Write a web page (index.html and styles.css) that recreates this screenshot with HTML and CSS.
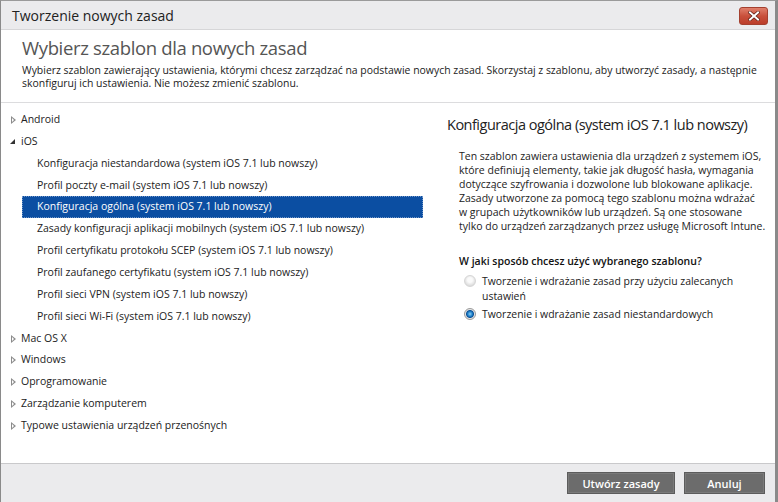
FILE: index.html
```html
<!DOCTYPE html>
<html lang="pl">
<head>
<meta charset="utf-8">
<title>Tworzenie nowych zasad</title>
<link rel="stylesheet" href="styles.css">
</head>
<body>
<div class="window">
  <div class="titlebar">
    <span class="title">Tworzenie nowych zasad</span>
    <button class="close" aria-label="Zamknij">
      <svg width="12" height="10" viewBox="0 0 12 10"><path d="M2 1.5 L10 8.5 M10 1.5 L2 8.5" stroke="#5a1a12" stroke-width="3.4" stroke-linecap="square"/><path d="M2 1.5 L10 8.5 M10 1.5 L2 8.5" stroke="#fff" stroke-width="2" stroke-linecap="square"/></svg>
    </button>
  </div>
  <div class="content">
    <div class="header">
      <h1>Wybierz szablon dla nowych zasad</h1>
      <p>Wybierz szablon zawierający ustawienia, którymi chcesz zarządzać na podstawie nowych zasad. Skorzystaj z szablonu, aby utworzyć zasady, a następnie skonfiguruj ich ustawienia. Nie możesz zmienić szablonu.</p>
    </div>
    <div class="body">
      <ul class="tree">
        <li class="node"><span class="arrow closed"></span>Android</li>
        <li class="node"><span class="arrow open"></span>iOS</li>
        <li class="leaf">Konfiguracja niestandardowa (system iOS 7.1 lub nowszy)</li>
        <li class="leaf">Profil poczty e-mail (system iOS 7.1 lub nowszy)</li>
        <li class="leaf selected">Konfiguracja ogólna (system iOS 7.1 lub nowszy)</li>
        <li class="leaf">Zasady konfiguracji aplikacji mobilnych (system iOS 7.1 lub nowszy)</li>
        <li class="leaf">Profil certyfikatu protokołu SCEP (system iOS 7.1 lub nowszy)</li>
        <li class="leaf">Profil zaufanego certyfikatu (system iOS 7.1 lub nowszy)</li>
        <li class="leaf">Profil sieci VPN (system iOS 7.1 lub nowszy)</li>
        <li class="leaf">Profil sieci Wi-Fi (system iOS 7.1 lub nowszy)</li>
        <li class="node"><span class="arrow closed"></span>Mac OS X</li>
        <li class="node"><span class="arrow closed"></span>Windows</li>
        <li class="node"><span class="arrow closed"></span>Oprogramowanie</li>
        <li class="node"><span class="arrow closed"></span>Zarządzanie komputerem</li>
        <li class="node"><span class="arrow closed"></span>Typowe ustawienia urządzeń przenośnych</li>
      </ul>
      <div class="details">
        <h2>Konfiguracja ogólna (system iOS 7.1 lub nowszy)</h2>
        <p class="desc">Ten szablon zawiera ustawienia dla urządzeń z systemem iOS,<br>które definiują elementy, takie jak długość hasła, wymagania<br>dotyczące szyfrowania i dozwolone lub blokowane aplikacje.<br>Zasady utworzone za pomocą tego szablonu można wdrażać<br>w grupach użytkowników lub urządzeń. Są one stosowane<br>tylko do urządzeń zarządzanych przez usługę Microsoft Intune.</p>
        <p class="question">W jaki sposób chcesz użyć wybranego szablonu?</p>
        <label class="radio disabled"><span class="dot"></span><span class="rtext">Tworzenie i wdrażanie zasad przy użyciu zalecanych ustawień</span></label>
        <label class="radio checked"><span class="dot"></span><span class="rtext">Tworzenie i wdrażanie zasad niestandardowych</span></label>
      </div>
    </div>
  </div>
  <div class="footer">
    <button class="btn btn-create">Utwórz zasady</button>
    <button class="btn btn-cancel">Anuluj</button>
  </div>
</div>
</body>
</html>
```

FILE: styles.css
```css
* { box-sizing: border-box; }
html, body { margin: 0; padding: 0; }
body {
  width: 778px;
  height: 502px;
  overflow: hidden;
  background: #8f8f8f;
  font-family: "Open Sans", "Noto Sans", "DejaVu Sans", sans-serif;
  color: #222;
}
.window {
  width: 778px;
  height: 502px;
  display: flex;
  flex-direction: column;
  border-left: 1px solid #8a8a8a;
  border-right: 3px solid #8a8a8a;
  border-top: 1px solid #9a9a9a;
  background: #ebebed;
}
.titlebar {
  height: 29px;
  display: flex;
  align-items: center;
  justify-content: space-between;
  padding: 0 7px 0 11px;
  background: #ebebed;
  border-bottom: 1px solid #d6d6d8;
  flex: none;
}
.title {
  font-size: 14px;
  color: #222;
}
.close {
  width: 29px;
  height: 18px;
  margin-top: 1px;
  border: 1px solid #a4402f;
  border-radius: 3px;
  background: linear-gradient(#e0806c, #c9503b 50%, #bb3d2a);
  display: flex;
  align-items: center;
  justify-content: center;
  padding: 0;
}
.content {
  flex: 1;
  background: #fff;
  display: flex;
  flex-direction: column;
  border-left: 1px solid #8a8a8a;
  margin-left: -1px;
}
.header {
  padding: 6px 16px 0 21px;
  height: 73px;
  border-bottom: 1px solid #dcdcde;
  flex: none;
}
.header h1 {
  margin: 0;
  font-weight: 400;
  font-size: 18.5px;
  letter-spacing: -0.35px;
  color: #555;
  line-height: 24px;
}
.header p {
  margin: 4px 0 0 0;
  font-size: 10.45px;
  line-height: 12.5px;
  color: #222;
}
.body {
  flex: 1;
  display: flex;
}
.tree {
  list-style: none;
  margin: 0;
  padding: 6px 0 0 0;
  width: 422px;
  flex: none;
}
.tree li {
  height: 21.86px;
  line-height: 21.86px;
  font-size: 10.5px;
  color: #222;
  white-space: nowrap;
}
.node {
  display: flex;
  align-items: center;
  padding-left: 9px;
}
.leaf {
  margin-left: 21px;
  padding-left: 15px;
}
.leaf.selected {
  background: #0b4ea2;
  color: #fff;
  outline: 1px dotted #6f95c8;
  outline-offset: -1px;
}
.arrow {
  width: 11px;
  height: 10px;
  flex: none;
  position: relative;
}
.arrow.closed::before {
  content: "";
  position: absolute;
  left: 1px;
  top: 1px;
  border-left: 5px solid #8c8c8c;
  border-top: 4px solid transparent;
  border-bottom: 4px solid transparent;
}
.arrow.closed::after {
  content: "";
  position: absolute;
  left: 2px;
  top: 3px;
  border-left: 2px solid #fff;
  border-top: 2px solid transparent;
  border-bottom: 2px solid transparent;
}
.arrow.open::before {
  content: "";
  position: absolute;
  left: 0;
  top: 2px;
  border-right: 5px solid #333;
  border-top: 5px solid transparent;
}
.details {
  flex: 1;
  padding: 11px 2px 0 24px;
}
.details h2 {
  margin: 0;
  font-weight: 400;
  font-size: 14.5px;
  letter-spacing: -0.5px;
  line-height: 22px;
  color: #222;
  white-space: nowrap;
}
.desc {
  margin: 13px 0 0 12px;
  font-size: 10.5px;
  line-height: 14px;
  color: #222;
  white-space: nowrap;
}
.question {
  margin: 21px 0 0 12px;
  font-size: 10.5px;
  font-weight: 600;
  line-height: 14px;
  color: #111;
}
.radio {
  display: flex;
  align-items: flex-start;
  margin: 6px 0 0 17px;
  font-size: 10.45px;
  line-height: 15px;
  color: #222;
}
.radio + .radio { margin-top: 3px; }
.rtext { width: 270px; }
.dot {
  width: 12px;
  height: 12px;
  border-radius: 50%;
  flex: none;
  margin: 1px 6px 0 0;
}
.radio.disabled .dot {
  background: radial-gradient(circle at 50% 40%, #fafafa 30%, #dedede 70%, #cfcfcf);
  border: 1px solid #d6d6d6;
}
.radio.checked .dot {
  background: radial-gradient(circle, #8fd0f5 0, #1a7cc6 2.5px, #0c4f94 3.5px, #e9e9e9 4.5px, #d4d4d4 6px);
  border: 1px solid #9a9a9a;
}
.footer {
  height: 39px;
  flex: none;
  border-top: 1px solid #c9c9cb;
  background: #ebebed;
  display: flex;
  justify-content: flex-end;
  align-items: flex-start;
  gap: 9px;
  padding: 8px 10px 0 0;
}
.btn {
  height: 22px;
  border: 1px solid #5c5c5c;
  background: #6c6c6c;
  color: #fff;
  font-family: inherit;
  font-size: 11px;
  font-weight: 600;
  padding: 0;
  box-shadow: inset 0 0 0 1px #7a7a7a;
}
.btn-create { width: 108px; }
.btn-cancel { width: 81px; }
```
